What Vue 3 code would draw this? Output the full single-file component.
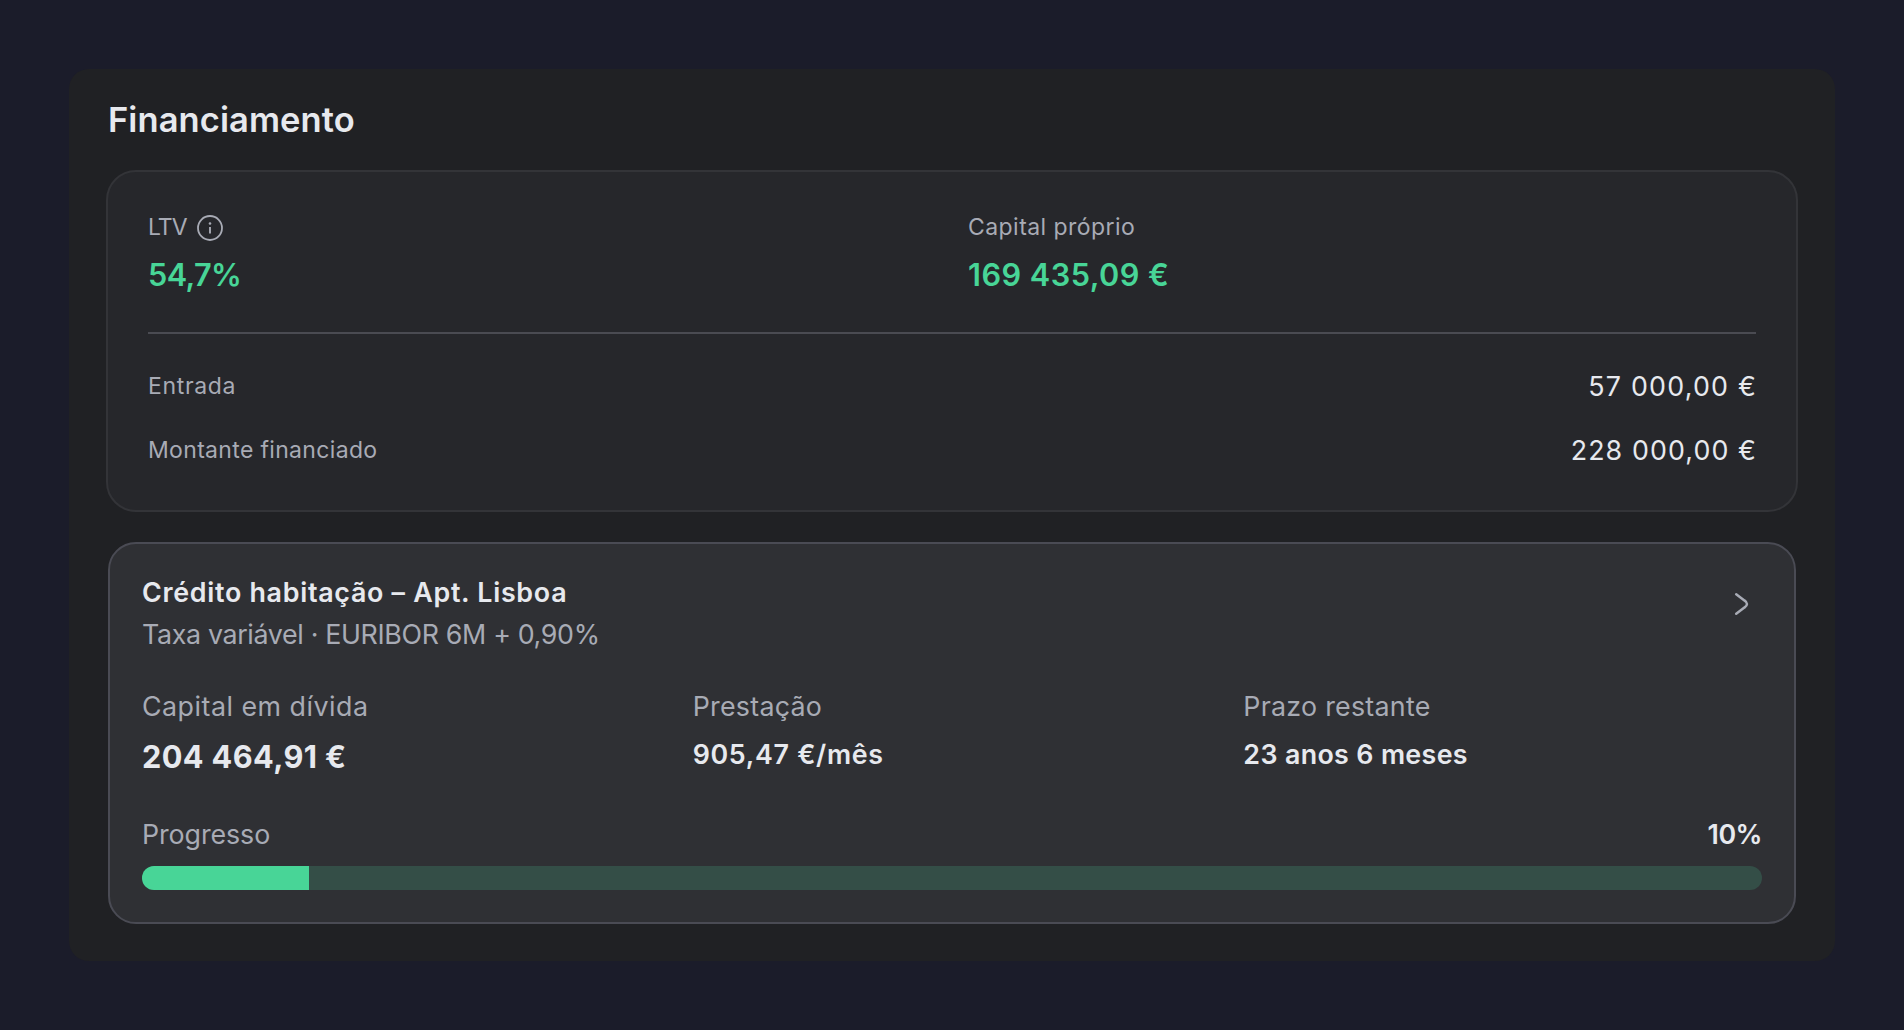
<script setup>
const totals = [
    { label: 'Entrada', value: '57 000,00 €', name: 'entrada' },
    { label: 'Montante financiado', value: '228 000,00 €', name: 'montante' }
]

const loan = {
    name: 'Crédito habitação – Apt. Lisboa',
    rate: 'Taxa variável · EURIBOR 6M + 0,90%',
    progress: 10.33
}

const stats = [
    { label: 'Capital em dívida', value: '204 464,91 €', name: 'capital' },
    { label: 'Prestação', value: '905,47 €/mês', name: 'prestacao' },
    { label: 'Prazo restante', value: '23 anos 6 meses', name: 'prazo' }
]
</script>

<template>
    <div class="page">
        <section class="panel">
            <h2 class="title">Financiamento</h2>

            <div class="summary">
                <div class="metrics">
                    <div class="metric">
                        <div class="metric-label">
                            <span class="ltv">LTV</span>
                            <svg class="info" width="26" height="26" viewBox="0 0 26 26" fill="none">
                                <circle cx="13" cy="13" r="12" stroke="currentColor" stroke-width="1.8" />
                                <circle cx="13" cy="8.5" r="1.3" fill="currentColor" />
                                <path d="M13 12v6.5" stroke="currentColor" stroke-width="1.9" />
                            </svg>
                        </div>
                        <div class="metric-value percent">54,7%</div>
                    </div>
                    <div class="metric">
                        <div class="metric-label equity">Capital próprio</div>
                        <div class="metric-value">169 435,09 €</div>
                    </div>
                </div>

                <div class="divider"></div>

                <div class="totals">
                    <div v-for="row in totals" :key="row.name" class="total" :class="row.name">
                        <span class="total-label">{{ row.label }}</span>
                        <span class="total-value">{{ row.value }}</span>
                    </div>
                </div>
            </div>

            <div class="loan">
                <div class="loan-head">
                    <div>
                        <div class="loan-name">{{ loan.name }}</div>
                        <div class="loan-rate">{{ loan.rate }}</div>
                    </div>
                    <svg class="chevron" width="16" height="24" viewBox="0 0 16 24" fill="none">
                        <path d="M2.2 2.2L10.4 8.4Q15.6 12 10.4 15.6L2.2 21.8" stroke="currentColor" stroke-width="2.5" stroke-linecap="round" stroke-linejoin="round" />
                    </svg>
                </div>

                <div class="stats">
                    <div v-for="stat in stats" :key="stat.name" class="stat" :class="stat.name">
                        <div class="stat-label">{{ stat.label }}</div>
                        <div class="stat-value">{{ stat.value }}</div>
                    </div>
                </div>

                <div class="progress-head">
                    <span class="progress-label">Progresso</span>
                    <span class="progress-value">10%</span>
                </div>
                <div class="bar">
                    <div class="bar-fill" :style="{ width: loan.progress + '%' }"></div>
                </div>
            </div>
        </section>
    </div>
</template>

<style>
body {
    background: #1b1c2a;
}
</style>

<style scoped>
.page {
    box-sizing: border-box;
    min-height: 1030px;
    padding: 69px;
    background: #1b1c2a;
    color: #e7e9ee;
    font-family: Inter, "Liberation Sans", sans-serif;
    font-size: 26.8px;
    white-space: nowrap;
}

.panel {
    padding: 26px 37px 37px;
    border-radius: 20px;
    background: #202124;
}

.title {
    margin: 0 0 25px 2px;
    font-size: 34.5px;
    font-weight: 600;
    line-height: 50px;
    letter-spacing: 0.08px;
}

/* summary card */
.summary {
    margin-bottom: 30px;
    padding: 38px 40px 40px;
    border: 2px solid #333438;
    border-radius: 30px;
    background: #26272b;
}

.metrics {
    display: grid;
    grid-template-columns: repeat(2, 1fr);
    column-gap: 32px;
}

.metric-label {
    display: flex;
    align-items: center;
    height: 35px;
    margin-bottom: 9px;
    color: #a8abb5;
    font-size: 23px;
    line-height: 37px;
}

.ltv {
    letter-spacing: -0.97px;
}

.info {
    margin-left: 10px;
}

.equity {
    letter-spacing: 0.44px;
}

.metric-value {
    color: #48d597;
    font-size: 30.7px;
    font-weight: 600;
    line-height: 42px;
    letter-spacing: 0.45px;
}

.percent {
    letter-spacing: -0.63px;
}

.divider {
    height: 2px;
    margin: 36px 0 32px;
    background: #4a4b52;
}

.totals {
    display: flex;
    flex-direction: column;
    gap: 24px;
}

.total {
    display: flex;
    align-items: center;
    justify-content: space-between;
    height: 40px;
    line-height: 40px;
}

.total-label {
    color: #a8abb5;
    font-size: 23px;
    letter-spacing: 0.33px;
}

.entrada .total-label {
    letter-spacing: 0.65px;
}

.total-value {
    margin-right: -1px;
    letter-spacing: 1.1px;
}

.entrada .total-value {
    letter-spacing: 1.22px;
}

/* loan card */
.loan {
    margin: 0 2px;
    padding: 28px 32px 32px;
    border: 2px solid #4a4b54;
    border-radius: 28px;
    background: #2f3034;
}

.loan-head {
    display: flex;
    justify-content: space-between;
    margin-bottom: 32px;
    line-height: 40px;
}

.loan-name {
    margin-bottom: 2px;
    font-weight: 600;
    letter-spacing: 0.73px;
}

.loan-rate {
    color: #a8abb5;
    letter-spacing: -0.34px;
}

.chevron {
    margin: 20px 12px 0 0;
    color: #a8abb5;
}

.stats {
    display: grid;
    grid-template-columns: repeat(3, 1fr);
    column-gap: 32px;
    margin-bottom: 33px;
}

.stat-label {
    margin-bottom: 6px;
    color: #a8abb5;
    line-height: 40px;
    letter-spacing: 0.26px;
}

.stat-value {
    font-weight: 600;
    line-height: 44px;
    letter-spacing: 0.36px;
}

.capital .stat-label {
    letter-spacing: 0.5px;
}

.capital .stat-value {
    font-size: 30.7px;
    font-weight: 700;
    line-height: 49px;
    letter-spacing: 0.39px;
}

.prestacao .stat-value {
    letter-spacing: 0.7px;
}

.progress-head {
    display: flex;
    justify-content: space-between;
    margin-bottom: 12px;
    line-height: 40px;
}

.progress-label {
    color: #a8abb5;
    letter-spacing: -0.08px;
}

.progress-value {
    font-weight: 600;
    letter-spacing: -0.5px;
}

.bar {
    height: 24px;
    overflow: hidden;
    border-radius: 12px;
    background: #344e47;
}

.bar-fill {
    height: 100%;
    background: #48d597;
}
</style>
